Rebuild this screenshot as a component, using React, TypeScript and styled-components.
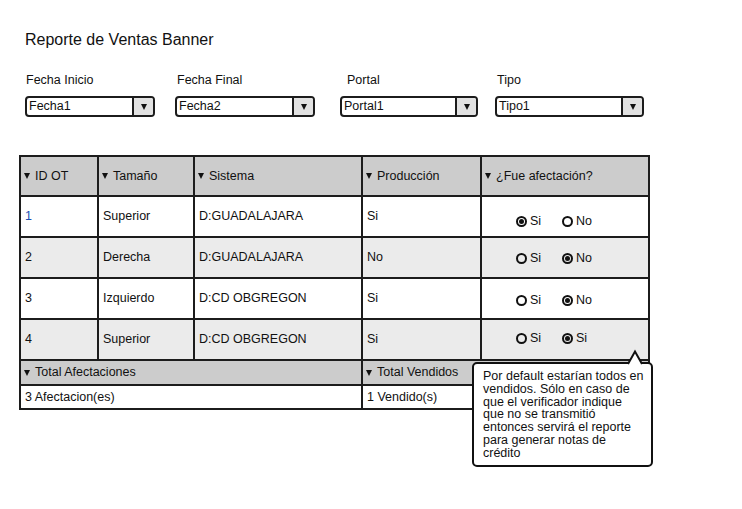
import React from 'react';
import styled, { createGlobalStyle } from 'styled-components';

const Global = createGlobalStyle`
  html, body { margin: 0; padding: 0; background: #ffffff; }
  body { font-family: "Liberation Sans", Arial, sans-serif; color: #111111; }
`;

const LINE = '#1c1c1c';

const Page = styled.div`
  position: relative;
  width: 742px;
  height: 509px;
  box-sizing: border-box;
  padding: 30px 0 0 19px;
`;

const Title = styled.h1`
  margin: 0 0 0 6px;
  font-size: 16px;
  font-weight: normal;
  line-height: 20px;
`;

const Filters = styled.div`
  display: grid;
  grid-template-columns: 150px 165px 155px 150px;
  margin: 23px 0 0 6px;
`;

const FilterGroup = styled.div`
  display: flex;
  flex-direction: column;
  gap: 8px;
`;

const FilterLabel = styled.label<{ $indent?: number }>`
  font-size: 12.5px;
  line-height: 15px;
  padding-left: ${(p) => p.$indent ?? 1}px;
`;

const Select = styled.div<{ $w: number }>`
  width: ${(p) => p.$w}px;
  height: 21px;
  box-sizing: border-box;
  border: 2px solid ${LINE};
  border-radius: 4px;
  display: flex;
  overflow: hidden;
  background: #fff;
`;

const SelectValue = styled.span`
  flex: 1;
  padding-left: 2px;
  font-size: 12.5px;
  line-height: 17px;
`;

const SelectArrow = styled.span`
  width: 19px;
  border-left: 2px solid ${LINE};
  background: #e2e2e2;
  display: flex;
  align-items: center;
  justify-content: center;
`;

const Tri = styled.span<{ $gap?: number }>`
  display: inline-block;
  width: 0;
  height: 0;
  border-left: 3.5px solid transparent;
  border-right: 3.5px solid transparent;
  border-top: 6px solid #111;
  margin-right: ${(p) => p.$gap ?? 0}px;
  flex: none;
`;

const Table = styled.div<{ $cols: string }>`
  width: 631px;
  box-sizing: border-box;
  display: grid;
  grid-template-columns: ${(p) => p.$cols};
  border-left: 2px solid ${LINE};
`;

const MainTable = styled(Table)`
  margin-top: 38px;
  border-top: 2px solid ${LINE};
`;

const Cell = styled.div<{ $h: number; $bg: string; $color?: string }>`
  height: ${(p) => p.$h}px;
  box-sizing: border-box;
  border-right: 2px solid ${LINE};
  border-bottom: 2px solid ${LINE};
  background: ${(p) => p.$bg};
  color: ${(p) => p.$color ?? '#111'};
  display: flex;
  align-items: center;
  padding-left: 4px;
  font-size: 12.5px;
  line-height: 15px;
  white-space: nowrap;
`;

const HeadCell = styled(Cell)`
  padding-left: 3px;
`;

const RadioCell = styled(Cell)<{ $shift: number }>`
  padding-left: 34px;
  padding-top: ${(p) => Math.max(0, p.$shift * 2)}px;
  padding-bottom: ${(p) => Math.max(0, -p.$shift * 2)}px;
`;

const RadioItem = styled.span`
  width: 46px;
  display: flex;
  align-items: center;
  gap: 3px;
`;

const RadioDot = styled.span<{ $on: boolean }>`
  width: 11px;
  height: 11px;
  box-sizing: border-box;
  border: 2px solid #111;
  border-radius: 50%;
  display: flex;
  align-items: center;
  justify-content: center;
  &::after {
    content: '';
    width: 5px;
    height: 5px;
    border-radius: 50%;
    background: ${(p) => (p.$on ? '#111' : 'transparent')};
  }
`;

const Tooltip = styled.div`
  position: absolute;
  left: 472px;
  top: 362px;
  width: 181px;
  box-sizing: border-box;
  border: 2px solid #111;
  border-radius: 5px;
  background: #fff;
  padding: 6px 6px 5px 9px;
  font-size: 12.5px;
  line-height: 12.8px;
  white-space: nowrap;
`;

const Pointer = styled.svg`
  position: absolute;
  left: 154px;
  top: -14px;
  overflow: visible;
`;

const rows = [
  { id: '1', blue: true, size: 'Superior', sys: 'D:GUADALAJARA', prod: 'Si', radios: [['Si', true], ['No', false]], shift: 5, bg: '#ffffff' },
  { id: '2', size: 'Derecha', sys: 'D:GUADALAJARA', prod: 'No', radios: [['Si', false], ['No', true]], shift: 0.5, bg: '#ebebeb' },
  { id: '3', size: 'Izquierdo', sys: 'D:CD OBGREGON', prod: 'Si', radios: [['Si', false], ['No', true]], shift: 1.5, bg: '#ffffff' },
  { id: '4', size: 'Superior', sys: 'D:CD OBGREGON', prod: 'Si', radios: [['Si', false], ['Si', true]], shift: -1.5, bg: '#ebebeb' },
] as { id: string; blue?: boolean; size: string; sys: string; prod: string; radios: [string, boolean][]; shift: number; bg: string }[];

const filters = [
  { label: 'Fecha Inicio', value: 'Fecha1', w: 130, indent: 1 },
  { label: 'Fecha Final', value: 'Fecha2', w: 140, indent: 2 },
  { label: 'Portal', value: 'Portal1', w: 138, indent: 7 },
  { label: 'Tipo', value: 'Tipo1', w: 149, indent: 2 },
];

const heads = ['ID OT', 'Tamaño', 'Sistema', 'Producción', '¿Fue afectación?'];
const GREY = '#cccccc';

export default function App() {
  return (
    <Page>
      <Global />
      <Title>Reporte de Ventas Banner</Title>
      <Filters>
        {filters.map((f) => (
          <FilterGroup key={f.label}>
            <FilterLabel $indent={f.indent}>{f.label}</FilterLabel>
            <Select $w={f.w}>
              <SelectValue>{f.value}</SelectValue>
              <SelectArrow>
                <Tri />
              </SelectArrow>
            </Select>
          </FilterGroup>
        ))}
      </Filters>

      <MainTable $cols="78px 96px 168px 119px 168px">
        {heads.map((h) => (
          <HeadCell key={h} $h={40} $bg={GREY}>
            <Tri $gap={5} />
            {h}
          </HeadCell>
        ))}
        {rows.map((r) => (
          <React.Fragment key={r.id}>
            <Cell $h={41} $bg={r.bg} $color={r.blue ? '#1a4fb5' : undefined}>{r.id}</Cell>
            <Cell $h={41} $bg={r.bg}>{r.size}</Cell>
            <Cell $h={41} $bg={r.bg}>{r.sys}</Cell>
            <Cell $h={41} $bg={r.bg}>{r.prod}</Cell>
            <RadioCell $h={41} $bg={r.bg} $shift={r.shift}>
              {r.radios.map(([t, on], i) => (
                <RadioItem key={i}>
                  <RadioDot $on={on} />
                  {t}
                </RadioItem>
              ))}
            </RadioCell>
          </React.Fragment>
        ))}
      </MainTable>

      <Table $cols="342px 287px">
        <HeadCell $h={25} $bg={GREY}>
          <Tri $gap={5} />
          Total Afectaciones
        </HeadCell>
        <HeadCell $h={25} $bg={GREY}>
          <Tri $gap={5} />
          Total Vendidos
        </HeadCell>
        <Cell $h={24} $bg="#ffffff">3 Afectacion(es)</Cell>
        <Cell $h={24} $bg="#ffffff">1 Vendido(s)</Cell>
      </Table>

      <Tooltip>
        <Pointer width="14" height="14" viewBox="0 0 14 14">
          <path d="M0 14.5 L7 1.5 L14 14.5 Z" fill="#ffffff" />
          <path d="M0 14 L7 1.5 L14 14" fill="none" stroke="#111" strokeWidth="2" strokeLinejoin="miter" />
        </Pointer>
        Por default estarían todos en
        <br />
        vendidos. Sólo en caso de
        <br />
        que el verificador indique
        <br />
        que no se transmitió
        <br />
        entonces servirá el reporte
        <br />
        para generar notas de
        <br />
        crédito
      </Tooltip>
    </Page>
  );
}
